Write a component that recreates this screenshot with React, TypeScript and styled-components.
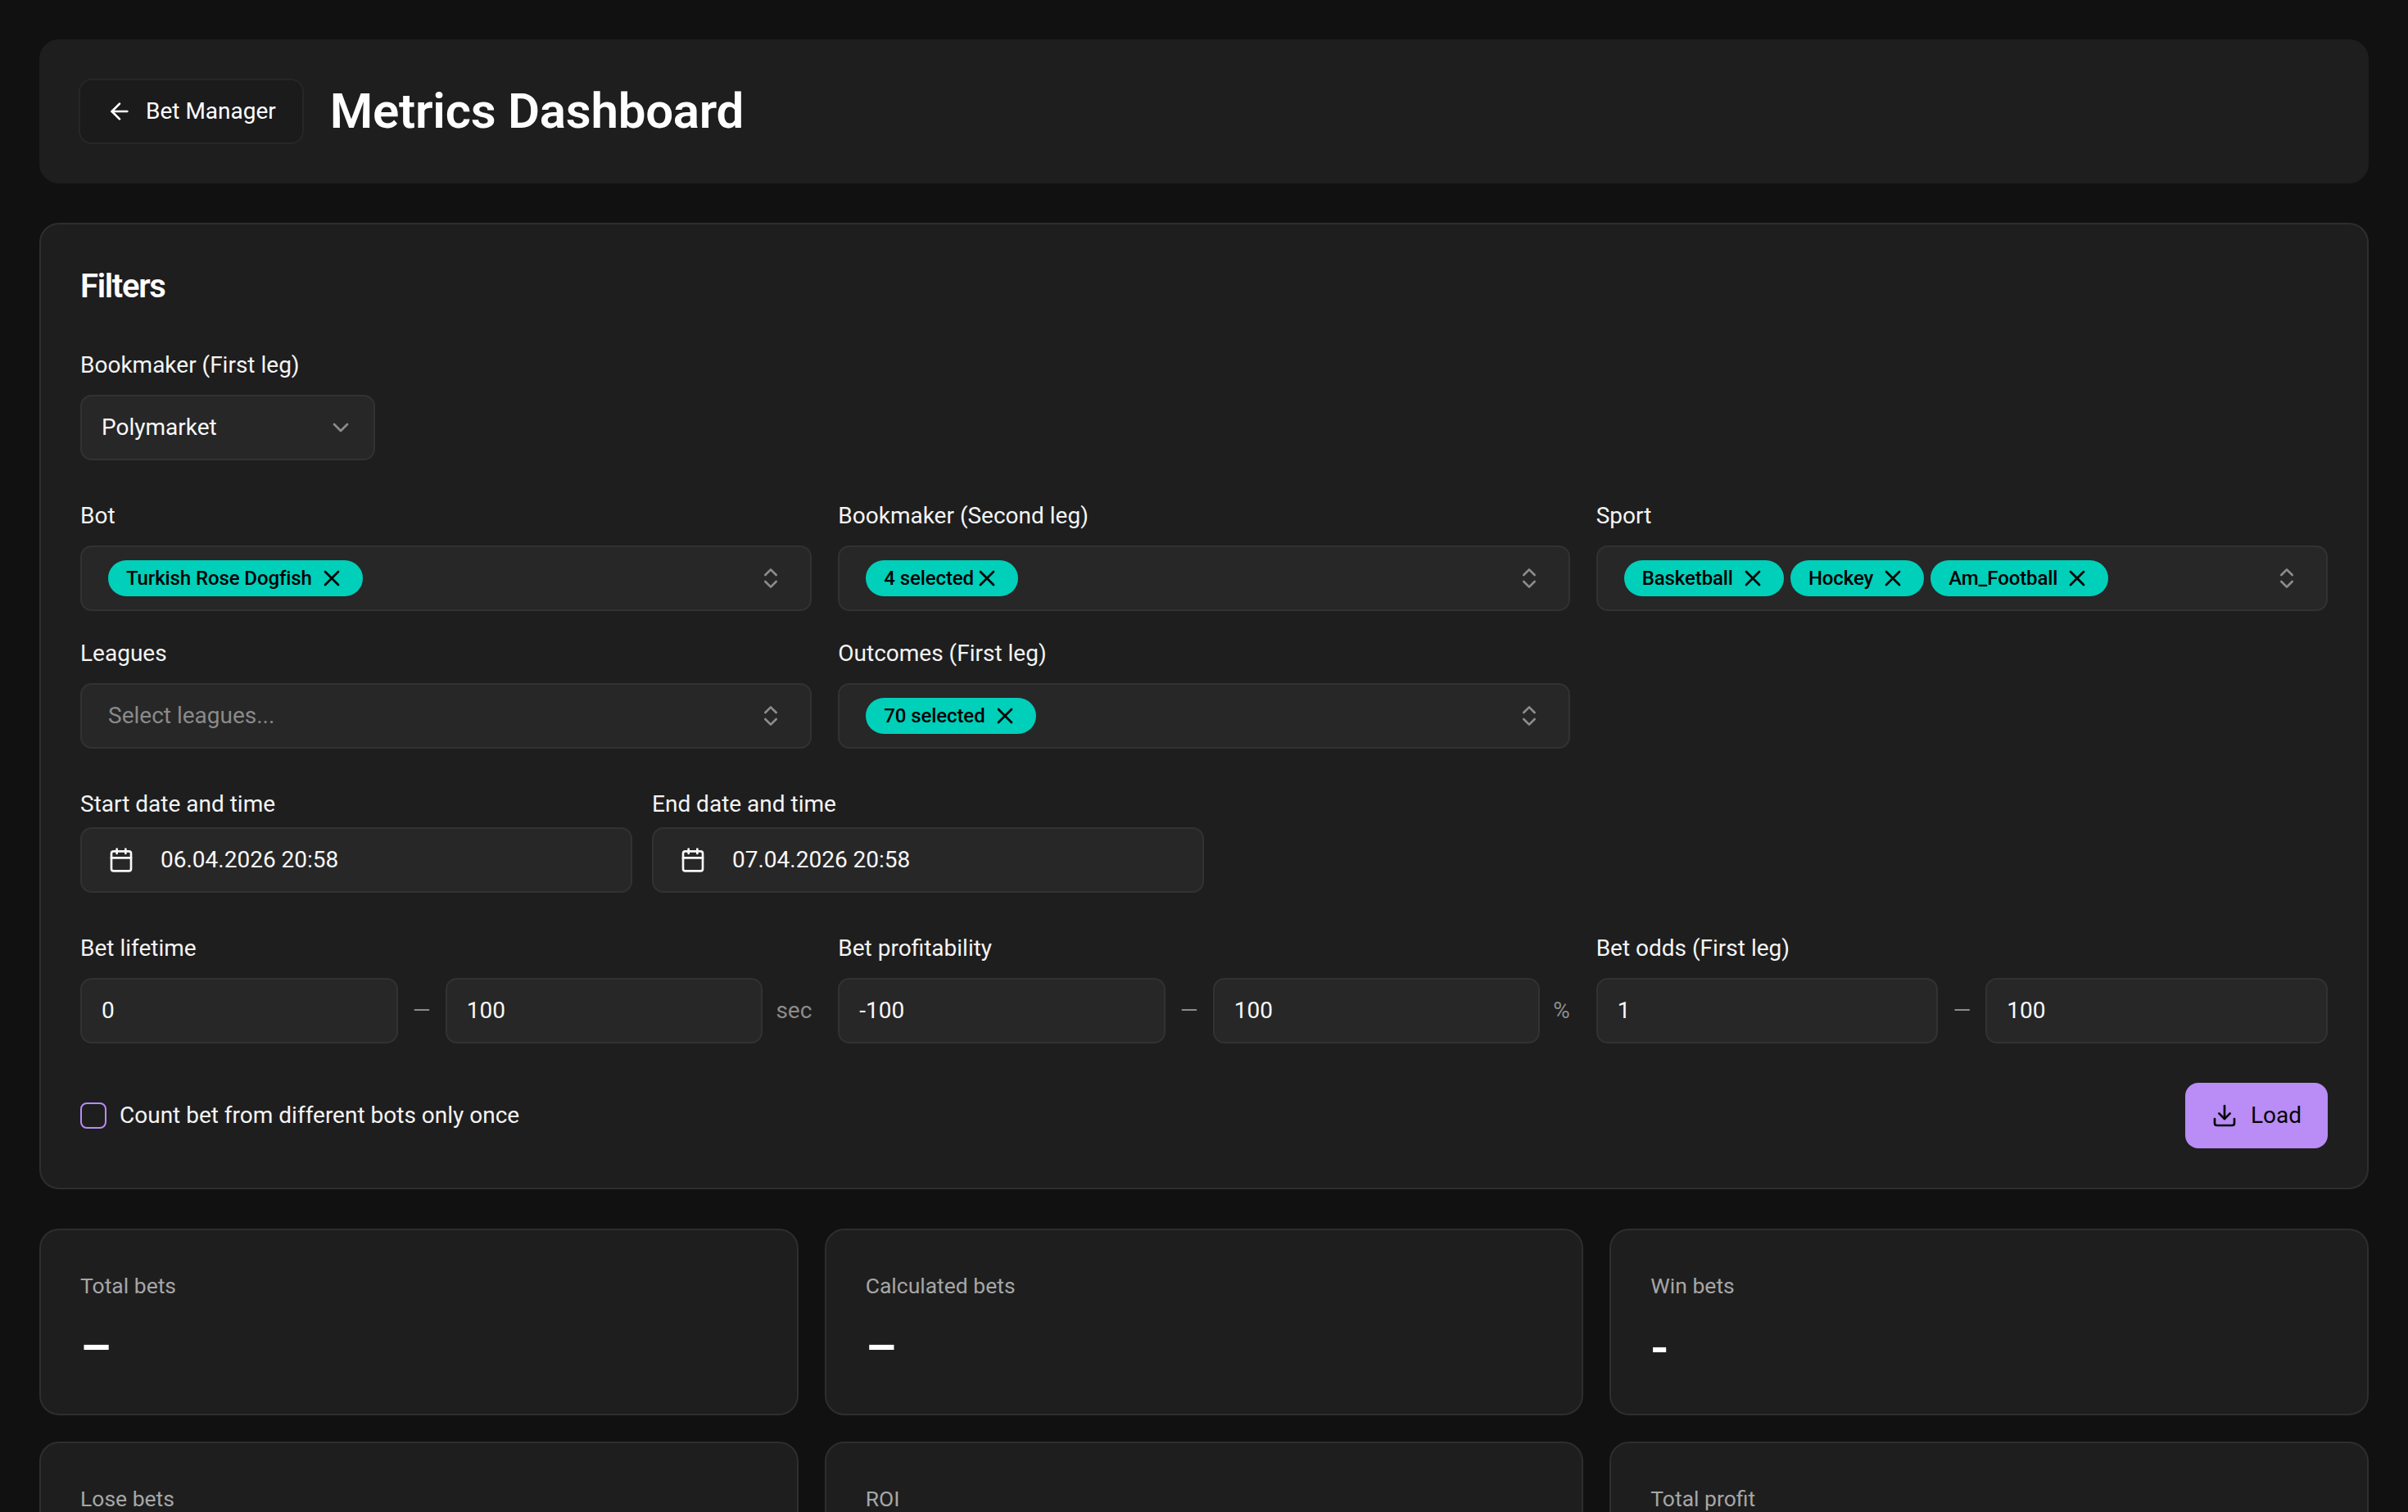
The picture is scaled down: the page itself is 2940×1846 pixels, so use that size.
import React from "react";
import styled, { createGlobalStyle } from "styled-components";
import { ArrowLeft, Calendar, ChevronDown, ChevronsUpDown, Download, X } from "lucide-react";

const Global = createGlobalStyle`
  html, body { margin: 0; padding: 0; height: 100vh; overflow: hidden; background: #111111; }
  * { box-sizing: border-box; }
  body { font-family: Roboto, "Liberation Sans", sans-serif; color: #ffffff; }
`;

const Page = styled.main`
  padding: 48px;
  display: flex;
  flex-direction: column;
  gap: 48px;
`;

const Header = styled.header`
  height: 176px;
  padding: 48px;
  display: flex;
  align-items: center;
  gap: 32px;
  background: #1e1e1e;
  border-radius: 24px;
`;

const BackButton = styled.button`
  height: 80px;
  padding: 0 32px;
  display: flex;
  align-items: center;
  gap: 16px;
  background: #1b1b1b;
  border: 2px solid #272727;
  border-radius: 16px;
  color: #ffffff;
  font: 400 28px/40px Roboto, sans-serif;
`;

const Title = styled.h1`
  margin: 0;
  font: 600 60px/72px Roboto, sans-serif;
  letter-spacing: -0.25px;
  color: #ffffff;
`;

const Card = styled.section`
  padding: 48px;
  background: #1e1e1e;
  border: 2px solid #2e2e2e;
  border-radius: 24px;
  display: flex;
  flex-direction: column;
  gap: 48px;
`;

const CardTitle = styled.h2`
  margin: 0;
  font: 600 40px/56px Roboto, sans-serif;
  letter-spacing: -1.3px;
  color: #ffffff;
`;

const Group = styled.div<{ $gap?: number }>`
  display: flex;
  flex-direction: column;
  gap: ${(p) => p.$gap ?? 16}px;
  min-width: 0;
`;

const Label = styled.label`
  font: 400 28px/40px Roboto, sans-serif;
  color: #f4f4f4;
`;

const Field = styled.div<{ $width?: number; $pad?: number }>`
  height: 80px;
  width: ${(p) => (p.$width ? `${p.$width}px` : "100%")};
  padding: 0 ${(p) => p.$pad ?? 24}px;
  display: flex;
  align-items: center;
  justify-content: space-between;
  background: #272727;
  border: 2px solid #323232;
  border-radius: 14px;
  font: 400 28px/40px Roboto, sans-serif;
  color: #f8f8f8;
  flex: none;
`;

const RangeInput = styled(Field)`
  flex: 1 1 0;
  width: auto;
  min-width: 0;
`;

const MutedIcon = styled.span`
  display: flex;
  color: #8c8c8c;
`;

const ThreeCols = styled.div`
  display: grid;
  grid-template-columns: repeat(3, 1fr);
  column-gap: 32px;
  row-gap: 32px;
`;

const Chips = styled.div`
  display: flex;
  gap: 8px;
`;

const Chip = styled.span<{ $tight?: boolean }>`
  height: 44px;
  padding: 0 22px;
  display: inline-flex;
  align-items: center;
  gap: ${(p) => (p.$tight ? 0 : 8)}px;
  border-radius: 22px;
  background: #00cfba;
  color: #000000;
  font: 500 24px/32px Roboto, sans-serif;
  letter-spacing: -0.1px;
  white-space: nowrap;
`;

const Placeholder = styled.span`
  color: #8a8a8a;
`;

const DateRow = styled.div`
  width: 1372px;
  display: grid;
  grid-template-columns: 1fr 1fr;
  gap: 24px;
`;

const DateValue = styled.span`
  display: flex;
  align-items: center;
  gap: 32px;
`;

const RangeRow = styled.div`
  display: flex;
  align-items: center;
  gap: 16px;
`;

const Dash = styled.span`
  flex: none;
  width: 26px;
  text-align: center;
  color: #8c8c8c;
  font: 400 28px/40px Roboto, sans-serif;
`;

const Unit = styled.span`
  flex: none;
  color: #8c8c8c;
  font: 400 28px/40px Roboto, sans-serif;
`;

const Footer = styled.div`
  display: flex;
  align-items: center;
  justify-content: space-between;
`;

const CheckRow = styled.label`
  display: flex;
  align-items: center;
  gap: 16px;
  font: 400 28px/40px Roboto, sans-serif;
  color: #f4f4f4;
`;

const Box = styled.span`
  width: 32px;
  height: 32px;
  border: 2px solid #b78cf5;
  border-radius: 8px;
`;

const LoadButton = styled.button`
  height: 80px;
  padding: 0 32px;
  display: flex;
  align-items: center;
  gap: 16px;
  border: none;
  border-radius: 16px;
  background: #b98cf6;
  color: #050505;
  font: 400 28px/40px Roboto, sans-serif;
`;

const Metrics = styled.div`
  display: grid;
  grid-template-columns: repeat(3, 1fr);
  gap: 32px;
`;

const MetricCard = styled.article`
  padding: 48px;
  height: 228px;
  background: #1e1e1e;
  border: 2px solid #2e2e2e;
  border-radius: 24px;
  display: flex;
  flex-direction: column;
  gap: 20px;
`;

const MetricLabel = styled.span`
  font: 400 26.5px/40px Roboto, sans-serif;
  color: #a6a6a6;
`;

const MetricValue = styled.span`
  font: 600 60px/72px Roboto, sans-serif;
  color: #ffffff;
`;

const icon = { size: 32, strokeWidth: 2 };

const Tag = ({ text, tight }: { text: string; tight?: boolean }) => (
  <Chip $tight={tight}>
    {text}
    <X {...icon} />
  </Chip>
);

const MultiSelect = ({ label, children }: { label: string; children: React.ReactNode }) => (
  <Group>
    <Label>{label}</Label>
    <Field $pad={32}>
      <Chips>{children}</Chips>
      <MutedIcon>
        <ChevronsUpDown {...icon} />
      </MutedIcon>
    </Field>
  </Group>
);

const DateField = ({ label, value }: { label: string; value: string }) => (
  <Group $gap={8}>
    <Label>{label}</Label>
    <Field $pad={32}>
      <DateValue>
        <Calendar {...icon} />
        {value}
      </DateValue>
    </Field>
  </Group>
);

const Range = ({ label, from, to, unit }: { label: string; from: string; to: string; unit?: string }) => (
  <Group>
    <Label>{label}</Label>
    <RangeRow>
      <RangeInput>{from}</RangeInput>
      <Dash>—</Dash>
      <RangeInput>{to}</RangeInput>
      {unit && <Unit>{unit}</Unit>}
    </RangeRow>
  </Group>
);

const metrics: [string, string][] = [
  ["Total bets", "–"],
  ["Calculated bets", "–"],
  ["Win bets", "-"],
  ["Lose bets", "-"],
  ["ROI", "-"],
  ["Total profit", "-"],
];

export default function App() {
  return (
    <>
      <Global />
      <Page>
        <Header>
          <BackButton>
            <ArrowLeft {...icon} />
            Bet Manager
          </BackButton>
          <Title>Metrics Dashboard</Title>
        </Header>

        <Card>
          <CardTitle>Filters</CardTitle>

          <Group>
            <Label>Bookmaker (First leg)</Label>
            <Field $width={360}>
              Polymarket
              <MutedIcon>
                <ChevronDown {...icon} />
              </MutedIcon>
            </Field>
          </Group>

          <ThreeCols>
            <MultiSelect label="Bot">
              <Tag text="Turkish Rose Dogfish" />
            </MultiSelect>
            <MultiSelect label="Bookmaker (Second leg)">
              <Tag text="4 selected" tight />
            </MultiSelect>
            <MultiSelect label="Sport">
              <Tag text="Basketball" />
              <Tag text="Hockey" />
              <Tag text="Am_Football" />
            </MultiSelect>
            <Group>
              <Label>Leagues</Label>
              <Field $pad={32}>
                <Placeholder>Select leagues...</Placeholder>
                <MutedIcon>
                  <ChevronsUpDown {...icon} />
                </MutedIcon>
              </Field>
            </Group>
            <MultiSelect label="Outcomes (First leg)">
              <Tag text="70 selected" />
            </MultiSelect>
          </ThreeCols>

          <DateRow>
            <DateField label="Start date and time" value="06.04.2026 20:58" />
            <DateField label="End date and time" value="07.04.2026 20:58" />
          </DateRow>

          <ThreeCols>
            <Range label="Bet lifetime" from="0" to="100" unit="sec" />
            <Range label="Bet profitability" from="-100" to="100" unit="%" />
            <Range label="Bet odds (First leg)" from="1" to="100" />
          </ThreeCols>

          <Footer>
            <CheckRow>
              <Box />
              Count bet from different bots only once
            </CheckRow>
            <LoadButton>
              <Download {...icon} />
              Load
            </LoadButton>
          </Footer>
        </Card>

        <Metrics>
          {metrics.map(([label, value]) => (
            <MetricCard key={label}>
              <MetricLabel>{label}</MetricLabel>
              <MetricValue>{value}</MetricValue>
            </MetricCard>
          ))}
        </Metrics>
      </Page>
    </>
  );
}
